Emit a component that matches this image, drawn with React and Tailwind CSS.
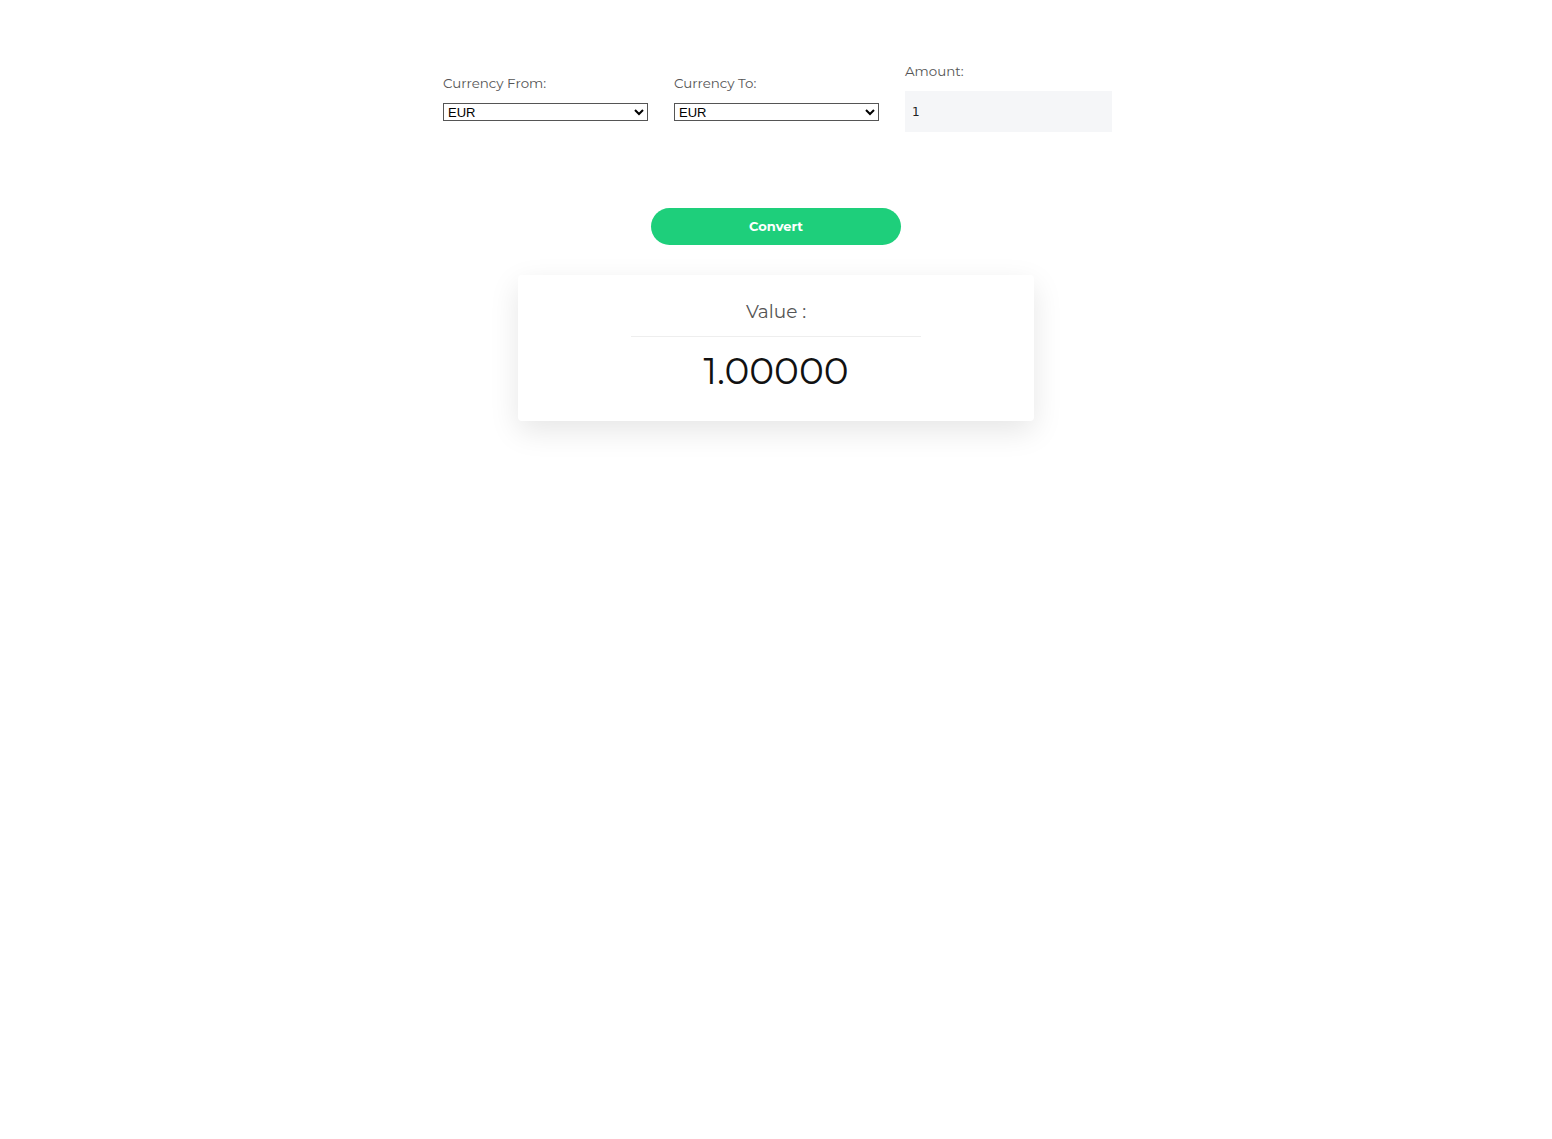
import { useState } from 'react'

const currencies = ['EUR', 'USD', 'GBP', 'JPY', 'CHF']

export default function App() {
  const [from, setFrom] = useState('EUR')
  const [to, setTo] = useState('EUR')
  const [amount, setAmount] = useState('1')

  return (
    <div className="min-h-screen bg-white pt-[61px] font-['Montserrat','DejaVu_Sans',sans-serif]">
      <div className="mx-auto grid w-[670px] grid-cols-3 items-center gap-[25px] pl-[2px]">
        <div className="flex flex-col">
          <label className="mb-[10px] text-[13.4px] leading-5 text-[#555]">Currency From:</label>
          <select value={from} onChange={e => setFrom(e.target.value)} className="h-[18px] w-[205px] border border-[#555] bg-white px-0 font-['Liberation_Sans',sans-serif] text-[13px] leading-none text-black">
            {currencies.map(c => <option key={c}>{c}</option>)}
          </select>
        </div>
        <div className="flex flex-col">
          <label className="mb-[10px] text-[13.4px] leading-5 text-[#555]">Currency To:</label>
          <select value={to} onChange={e => setTo(e.target.value)} className="h-[18px] w-[205px] border border-[#555] bg-white px-0 font-['Liberation_Sans',sans-serif] text-[13px] leading-none text-black">
            {currencies.map(c => <option key={c}>{c}</option>)}
          </select>
        </div>
        <div className="flex flex-col">
          <label className="mb-[10px] text-[13.4px] leading-5 text-[#555]">Amount:</label>
          <input value={amount} onChange={e => setAmount(e.target.value)} className="h-[41px] w-[207px] bg-[#f5f6f8] px-[7px] font-['DejaVu_Sans',sans-serif] text-[12px] text-[#222] outline-none" />
        </div>
      </div>

      <div className="mt-[76px] flex justify-center">
        <button className="h-[37px] w-[250px] rounded-full bg-[#1ecf7b] text-[13px] font-bold text-white">Convert</button>
      </div>

      <div className="mx-auto mt-[30px] flex h-[146px] w-[516px] flex-col items-center rounded-[4px] bg-white shadow-[0_10px_30px_rgba(0,0,0,0.1)]">
        <div className="mt-[25px] text-[18.5px] leading-6 text-[#555]">Value :</div>
        <div className="mt-[12px] h-px w-[290px] bg-[#eee]" />
        <div className="mt-[12px] text-[37.5px] leading-[44px] text-[#111]">1.00000</div>
      </div>
    </div>
  )
}
